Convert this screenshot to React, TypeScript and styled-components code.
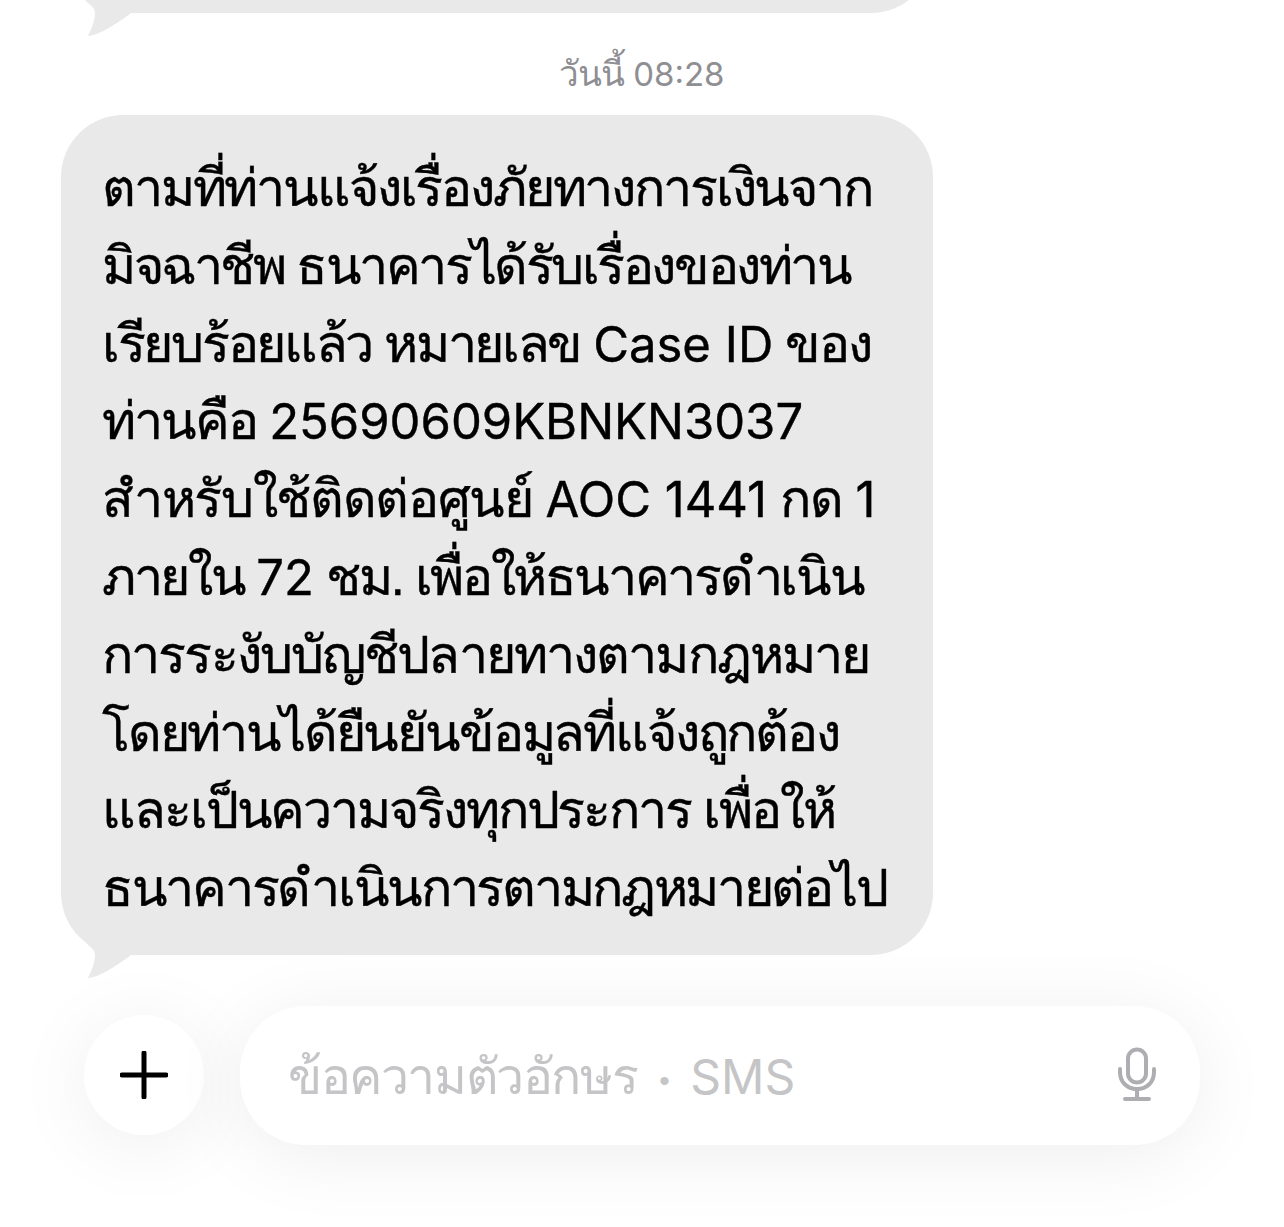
import React from 'react'
import styled, { createGlobalStyle } from 'styled-components'

const GlobalStyle = createGlobalStyle`
    html, body {
        margin: 0;
        padding: 0;
        background: #fff;
    }
    body {
        font-family: 'Liberation Sans', 'Noto Sans', 'DejaVu Sans', sans-serif;
    }
`

const Page = styled.div`
    width: 1284px;
    height: 1227px;
    overflow: hidden;
    background: #fff;
    display: flex;
    flex-direction: column;
`

const Thread = styled.div`
    display: flex;
    flex-direction: column;
    padding-left: 61px;
    margin-top: -120px;
`

const Bubble = styled.div<{ $height?: number }>`
    position: relative;
    box-sizing: border-box;
    width: 872px;
    height: ${p => (p.$height ? `${p.$height}px` : 'auto')};
    padding: 35px 0 27px 41px;
    border-radius: 62px;
    background: #e9e9e9;
    color: #000;
    font-size: 52px;
    line-height: 77.8px;
    -webkit-text-stroke: 0.4px #000;
`

const Tail = styled.svg`
    position: absolute;
    left: 20px;
    bottom: -26px;
    width: 60px;
    height: 40px;
`

const Line = styled.div<{ $spacing: number }>`
    white-space: nowrap;
    height: 77.8px;
    letter-spacing: ${p => p.$spacing}px;
`

const Latin = styled.span<{ $size: number }>`
    font-family: 'Inter', 'Liberation Sans', sans-serif;
    font-size: ${p => p.$size}px;
    letter-spacing: 0;
`

const Stamp = styled.div`
    margin-top: 38px;
    margin-bottom: 18px;
    padding-right: 61px;
    height: 46px;
    line-height: 46px;
    text-align: center;
    color: #8e8e93;
    font-size: 35px;
    letter-spacing: -1px;
`

const Composer = styled.div`
    display: flex;
    align-items: center;
    gap: 36px;
    margin-top: 51px;
    padding-left: 84px;
`

const PlusButton = styled.div`
    width: 120px;
    height: 120px;
    flex: none;
    border-radius: 50%;
    background: #fff;
    display: flex;
    align-items: center;
    justify-content: center;
    box-shadow: 0 10px 80px rgba(0, 0, 0, 0.07);
`

const Field = styled.div`
    width: 960px;
    height: 139px;
    flex: none;
    box-sizing: border-box;
    padding: 0 43px 0 48px;
    border-radius: 66px;
    background: #fff;
    display: flex;
    align-items: center;
    justify-content: space-between;
    box-shadow: 0 10px 80px rgba(0, 0, 0, 0.07);
`

const Placeholder = styled.div`
    color: #c5c5c7;
    font-size: 50px;
    letter-spacing: -1.4px;
    white-space: nowrap;
    padding-top: 3px;
`

const Dot = styled.span`
    font-size: 30px;
    margin: 0 22px;
    vertical-align: 3px;
`

const lines = [
    { text: 'ตามที่ท่านแจ้งเรื่องภัยทางการเงินจาก', spacing: -2.15 },
    { text: 'มิจฉาชีพ ธนาคารได้รับเรื่องของท่าน', spacing: -2.45 },
    { text: 'เรียบร้อยแล้ว หมายเลข Case ID ของ', spacing: -2.3 },
    { text: 'ท่านคือ 25690609KBNKN3037', spacing: -2.05 },
    { text: 'สำหรับใช้ติดต่อศูนย์ AOC 1441 กด 1', spacing: -1.35 },
    { text: 'ภายใน 72 ชม. เพื่อให้ธนาคารดำเนิน', spacing: -2.35 },
    { text: 'การระงับบัญชีปลายทางตามกฎหมาย', spacing: -1.87 },
    { text: 'โดยท่านได้ยืนยันข้อมูลที่แจ้งถูกต้อง', spacing: -2.17 },
    { text: 'และเป็นความจริงทุกประการ เพื่อให้', spacing: -2.1 },
    { text: 'ธนาคารดำเนินการตามกฎหมายต่อไป', spacing: -2.3 },
]

// thai and latin need different sizes to sit at the same visual height
const mixed = (text: string, size: number) =>
    text.split(/([A-Za-z0-9:]+(?: [A-Za-z0-9:]+)*)/).map((part, i) =>
        i % 2 ? <Latin key={i} $size={size}>{part}</Latin> : part
    )

const BubbleTail = () => (
    <Tail viewBox="0 0 60 40">
        <path d="M4 0 C6 5 14 7 14 14 C14 22 10 31 7 37 C18 36 34 26 50 14 L50 0 Z" fill="#e9e9e9" />
    </Tail>
)

const App: React.FC = () => (
    <Page>
        <GlobalStyle />
        <Thread>
            <Bubble $height={133}>
                <BubbleTail />
            </Bubble>
            <Stamp>{mixed('วันนี้ 08:28', 33)}</Stamp>
            <Bubble>
                {lines.map(line => (
                    <Line key={line.text} $spacing={line.spacing}>{mixed(line.text, 49)}</Line>
                ))}
                <BubbleTail />
            </Bubble>
        </Thread>
        <Composer>
            <PlusButton>
                <svg width="48" height="48" viewBox="0 0 48 48">
                    <path d="M24 2 V46 M2 24 H46" stroke="#000" strokeWidth="5" strokeLinecap="round" />
                </svg>
            </PlusButton>
            <Field>
                <Placeholder>
                    ข้อความตัวอักษร<Dot>•</Dot><Latin $size={48}>SMS</Latin>
                </Placeholder>
                <svg width="40" height="56" viewBox="0 0 40 56" fill="none" stroke="#aeaeb2" strokeWidth="4" strokeLinecap="round">
                    <rect x="11" y="2.5" width="18" height="33" rx="9" />
                    <path d="M3 22 V25 C3 35 10 42 20 42 C30 42 37 35 37 25 V22" />
                    <path d="M20 42 V51 M8 52 H32" />
                </svg>
            </Field>
        </Composer>
    </Page>
)

export default App
